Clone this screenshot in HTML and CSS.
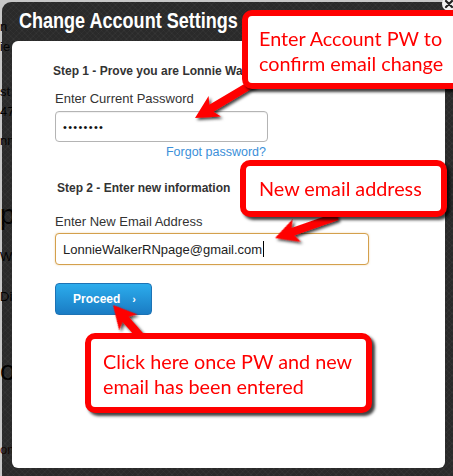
FILE: index.html
```html
<!DOCTYPE html>
<html lang="en">
<head>
  <meta charset="UTF-8">
  <link rel="stylesheet" href="styles.css">
</head>
<body>
<div class="page">
    <p class="ghost">n</p>
    <p class="ghost">ie</p>
    <p class="ghost">st</p>
    <p class="ghost">47</p>
    <p class="ghost">nn</p>
    <p class="ghost big">p</p>
    <p class="ghost">We</p>
    <p class="ghost">Dis</p>
    <p class="ghost big">o</p>
    <p class="ghost brown">om</p>
</div>
<div class="backdrop"></div>

<div class="modal">
    <div class="modal-title"><span>Change Account Settings</span></div>
    <div class="modal-close">
        <svg width="14" height="14" viewBox="0 0 14 14"><path d="M4 4 L10 10 M10 4 L4 10" stroke="#222" stroke-width="2.2" stroke-linecap="round"/></svg>
    </div>
    <div class="modal-body">
        <p class="step step-one">Step 1 - Prove you are Lonnie Walker</p>
        <p class="field-label">Enter Current Password</p>
        <div class="text-input pw-input"><span class="dots">&bull;&bull;&bull;&bull;&bull;&bull;&bull;&bull;</span></div>
        <p class="forgot"><a href="#">Forgot password?</a></p>

        <p class="step step-two">Step 2 - Enter new information</p>
        <p class="field-label">Enter New Email Address</p>
        <div class="text-input email-input">LonnieWalkerRNpage@gmail.com<span class="caret"></span></div>

        <div class="btn-proceed">Proceed <span class="chev">&rsaquo;</span></div>
    </div>
</div>

<!-- annotation layer -->
<svg class="arrows" width="453" height="476" viewBox="0 0 453 476">
    <defs>
        <filter id="shade" x="-20%" y="-20%" width="140%" height="140%">
            <feDropShadow dx="2" dy="2" stdDeviation="1.5" flood-color="#000" flood-opacity="0.75"/>
        </filter>
    </defs>
    <g filter="url(#shade)" fill="#ff0000">
        <g transform="translate(195 118) rotate(149.2)">
            <polygon points="0,0 -23,-12 -19,-4 -70,-4 -70,4 -19,4 -23,12"/>
        </g>
        <g transform="translate(275 238) rotate(160.7)">
            <polygon points="0,0 -23,-12 -19,-4 -66,-4 -66,4 -19,4 -23,12"/>
        </g>
        <g transform="translate(113 305) rotate(-131.3)">
            <polygon points="0,0 -23,-12 -19,-4 -48,-4 -48,4 -19,4 -23,12"/>
        </g>
    </g>
</svg>

<div class="callout callout-pw">Enter Account PW to<br>confirm email change</div>
<div class="callout callout-email">New email address</div>
<div class="callout callout-proceed">Click here once PW and new<br>email has been entered</div>
</body>
</html>
```

FILE: styles.css
```css
body {
    margin: 0;
    padding: 0;
    width: 453px;
    height: 476px;
    overflow: hidden;
    position: relative;
    background: #fff;
    font-family: 'Liberation Sans', Arial, sans-serif;
}

/* page behind the lightbox */
.page {
    padding-top: 20px;
}
.ghost {
    margin: 0;
    font-size: 13px;
    line-height: 14px;
    color: #000;
}
.ghost:nth-child(2) { margin-top: 6px; }
.ghost:nth-child(3) { margin-top: 31px; }
.ghost:nth-child(4) { margin-top: 6px; }
.ghost:nth-child(5) { margin-top: 15px; }
.ghost:nth-child(6) { margin-top: 52px; }
.ghost:nth-child(7) { margin-top: 20px; }
.ghost:nth-child(8) { margin-top: 26px; }
.ghost:nth-child(9) { margin-top: 52px; }
.ghost:nth-child(10) { margin-top: 57px; }
.ghost.big {
    font-size: 28px;
    line-height: 30px;
}
.ghost.brown {
    color: #6a1a10;
}
.backdrop {
    position: absolute;
    inset: 0;
    background: rgba(0, 0, 0, 0.22);
}

/* modal */
.modal {
    position: absolute;
    left: 2px;
    top: 2px;
    width: 470px;
    height: 490px;
    border-radius: 9px;
    background-color: rgba(0, 0, 0, 0.79);
    background-image: repeating-linear-gradient(45deg, rgba(255,255,255,0.025) 0 1px, transparent 1px 4px),
                      repeating-linear-gradient(-45deg, rgba(255,255,255,0.025) 0 1px, transparent 1px 4px);
}
.modal-title {
    padding: 6px 0 0 17px;
    height: 33px;
    font-weight: 700;
    font-size: 22px;
    line-height: 26px;
    color: #fff;
    white-space: nowrap;
}
.modal-title span {
    display: inline-block;
    transform: scaleX(0.82);
    transform-origin: left center;
}
.modal-close {
    position: absolute;
    left: 440px;
    top: -5px;
    width: 14px;
    height: 14px;
    border-radius: 50%;
    background: #f2f2f2;
}
.modal-close svg {
    display: block;
}
.modal-body {
    margin-left: 10px;
    width: 433px;
    height: 427px;
    box-sizing: border-box;
    padding: 23px 0 0 43px;
    background: #fff;
    border-radius: 6px;
    color: #333;
}

.step {
    margin: 0;
    font-size: 12px;
    line-height: 14px;
    font-weight: 700;
    color: #333;
}
.step-one {
    margin-left: -2px;
}
.step-two {
    margin-left: 2px;
    margin-top: 22.5px;
}
.field-label {
    margin: 13px 0 0;
    font-size: 13px;
    line-height: 15px;
    color: #333;
}
.step-two + .field-label {
    margin-top: 18.5px;
}
.text-input {
    box-sizing: border-box;
    display: flex;
    align-items: center;
    padding-left: 7px;
    background: #fff;
    border-radius: 4px;
    font-size: 13px;
    color: #222;
}
.pw-input {
    margin-top: 5px;
    width: 213px;
    height: 31px;
    border: 1px solid #b4b4b4;
    box-shadow: inset 0 1px 1px rgba(0, 0, 0, 0.06);
}
.dots {
    font-size: 11px;
    letter-spacing: 1.3px;
    color: #111;
}
.email-input {
    margin-top: 4.5px;
    width: 314px;
    height: 32px;
    border: 1px solid #d4a04c;
    box-shadow: 0 0 2px rgba(224, 170, 80, 0.5);
}
.caret {
    display: inline-block;
    width: 1px;
    height: 16px;
    margin-left: 1px;
    background: #000;
}
.forgot {
    margin: 2.5px 0 0;
    width: 211px;
    text-align: right;
    font-size: 12.5px;
    line-height: 14px;
}
.forgot a {
    color: #3b8fd9;
    text-decoration: none;
}

.btn-proceed {
    margin-top: 18px;
    box-sizing: border-box;
    width: 97px;
    height: 32px;
    padding-left: 17px;
    display: flex;
    align-items: center;
    border: 1px solid #1d73b5;
    border-radius: 4px;
    background: linear-gradient(#2cacec, #1a7cc4);
    color: #fff;
    font-size: 12px;
    font-weight: 700;
}
.chev {
    margin-left: 12px;
    font-size: 11px;
}

/* annotations */
.arrows {
    position: absolute;
    left: 0;
    top: 0;
}
.callout {
    position: absolute;
    box-sizing: border-box;
    border: 6px solid #ff0000;
    border-radius: 10px;
    background: #fff;
    box-shadow: 3px 3px 3px rgba(0, 0, 0, 0.75);
    color: #ff0000;
    font-family: Lato, 'Open Sans', sans-serif;
    font-size: 19.8px;
    line-height: 25px;
}
.callout-pw {
    left: 242px;
    top: 10px;
    width: 240px;
    height: 79px;
    padding: 10px 0 0 11px;
}
.callout-email {
    left: 240px;
    top: 160px;
    width: 207px;
    height: 57px;
    padding: 10px 0 0 13px;
}
.callout-proceed {
    left: 85px;
    top: 333px;
    width: 287px;
    height: 80px;
    padding: 10px 0 0 12px;
}
```
